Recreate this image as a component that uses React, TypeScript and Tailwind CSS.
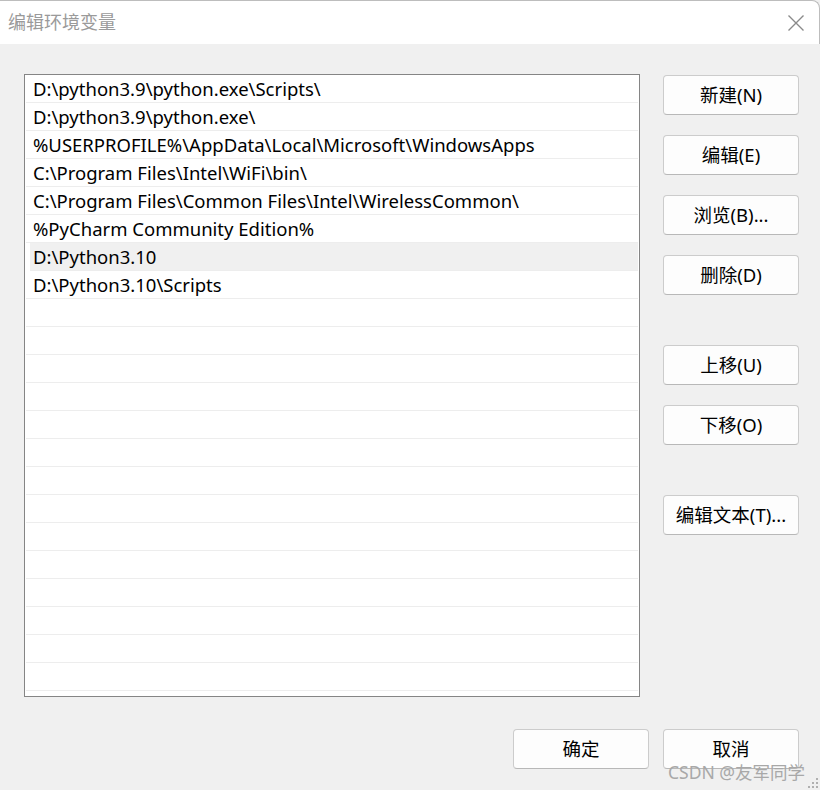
import React from "react";

const paths = [
  "D:\\python3.9\\python.exe\\Scripts\\",
  "D:\\python3.9\\python.exe\\",
  "%USERPROFILE%\\AppData\\Local\\Microsoft\\WindowsApps",
  "C:\\Program Files\\Intel\\WiFi\\bin\\",
  "C:\\Program Files\\Common Files\\Intel\\WirelessCommon\\",
  "%PyCharm Community Edition%",
  "D:\\Python3.10",
  "D:\\Python3.10\\Scripts",
];

const font = { fontFamily: '"Noto Sans", "Noto Sans CJK SC", sans-serif' };

function Btn({ label, className = "" }: { label: string; className?: string }) {
  return (
    <button
      className={`h-[40px] w-[136px] rounded-[4px] border border-[#cccccc] border-b-[#b8b8b8] bg-[#fdfdfd] text-[18.5px] text-black ${className}`}
    >
      {label}
    </button>
  );
}

export default function App() {
  const rows = Array.from({ length: 22 }, (_, i) => paths[i] ?? "");
  return (
    <div className="relative h-[790px] w-[820px] overflow-hidden bg-[#f0f0f0]" style={font}>
      <div className="flex h-[44px] items-center justify-between rounded-tr-[8px] border-t border-r border-[#bdbdbd] bg-white pl-[8px] pr-[14px]">
        <span className="text-[18px] text-[#9a9a9a]">编辑环境变量</span>
        <svg width="18" height="18" viewBox="0 0 18 18" className="mt-[1px]">
          <path d="M1.5 1.5 L16.5 16.5 M16.5 1.5 L1.5 16.5" stroke="#8a8a8a" strokeWidth="1.4" />
        </svg>
      </div>

      <div className="flex pl-[24px] pt-[30px]">
        <div className="h-[623px] w-[616px] border border-[#858585] bg-white px-[1px]">
          {rows.map((p, i) => (
            <div
              key={i}
              className={`flex h-[28px] items-center border-b border-[#ededed] text-[18.5px] text-black ${
                i === 6 ? "ml-[4px] bg-[#f0f0f0] pl-[3px]" : "pl-[7px]"
              }`}
            >
              {p}
            </div>
          ))}
        </div>

        <div className="ml-[23px] flex flex-col pt-[1px]">
          <Btn label="新建(N)" />
          <Btn label="编辑(E)" className="mt-[20px]" />
          <Btn label="浏览(B)..." className="mt-[20px]" />
          <Btn label="删除(D)" className="mt-[20px]" />
          <Btn label="上移(U)" className="mt-[50px]" />
          <Btn label="下移(O)" className="mt-[20px]" />
          <Btn label="编辑文本(T)..." className="mt-[50px]" />
        </div>
      </div>

      <div className="mt-[32px] flex justify-end gap-[14px] pr-[21px]">
        <Btn label="确定" />
        <Btn label="取消" />
      </div>

      <span className="absolute left-[668px] top-[759px] text-[17.5px] text-[#a8a8a8]">CSDN @友军同学</span>
      <div className="absolute bottom-[2px] right-[2px] grid grid-cols-3 gap-[2px]">
        {[0, 0, 1, 0, 1, 1, 1, 1, 1].map((v, i) => (
          <div key={i} className={`h-[2px] w-[2px] ${v ? "bg-[#b0b0b0]" : ""}`} />
        ))}
      </div>
    </div>
  );
}
